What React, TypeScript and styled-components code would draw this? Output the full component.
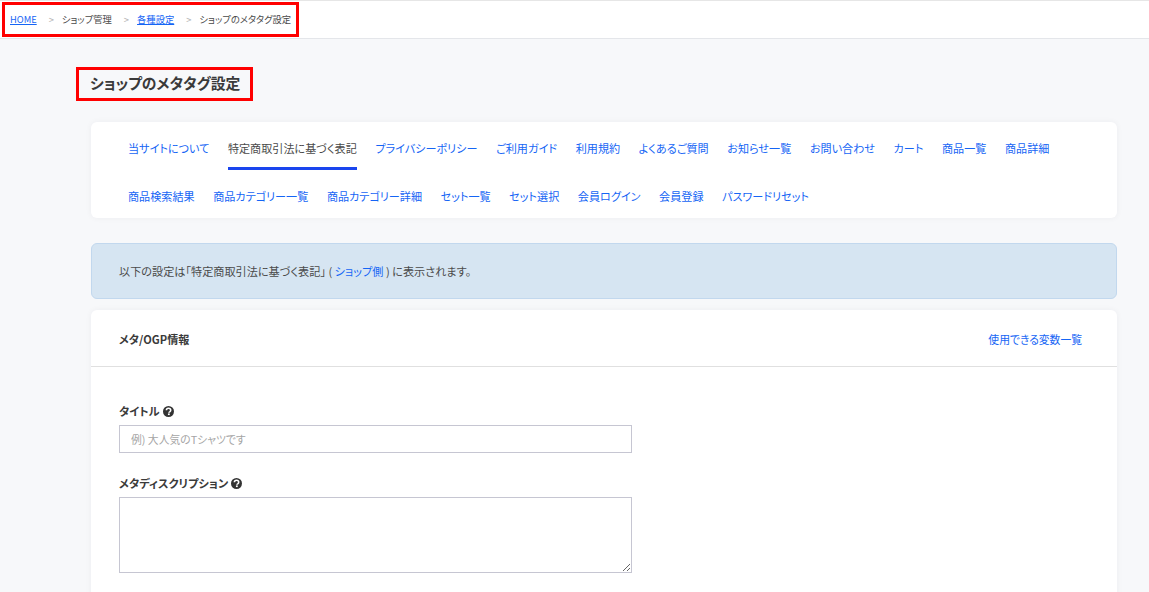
import React from "react";
import styled, { createGlobalStyle } from "styled-components";

const Global = createGlobalStyle`
  html, body { margin: 0; padding: 0; background: #f7f8fa; }
  body {
    font-family: "Noto Sans CJK JP", "Noto Sans", sans-serif;
    color: #333;
    height: 592px;
    overflow: hidden;
    font-feature-settings: "palt";
  }
  * { box-sizing: border-box; }
  a { text-decoration: none; }
`;

const TopBar = styled.header`
  height: 39px;
  background: #fff;
  border-top: 1px solid #e6e6e6;
  border-bottom: 1px solid #e4e6ea;
  display: flex;
  align-items: flex-start;
`;

const Crumbs = styled.nav`
  margin: 1px 0 0 2px;
  width: 297px;
  height: 35px;
  border: 3px solid #f00;
  display: flex;
  align-items: center;
  padding: 0 0 2px 5px;
  font-size: 9.3px;
  color: #4a4a4a;
  white-space: nowrap;
`;

const CrumbLink = styled.a`
  color: #1565f5;
  text-decoration: underline;
`;

const CrumbSep = styled.span`
  color: #b5b5b5;
  margin: 0 8px 0 12px;
`;

const Main = styled.main`
  padding: 28px 32px 0 91px;
`;

const TitleBox = styled.h1`
  margin: 0 0 21px -15px;
  width: 177px;
  height: 34px;
  border: 3px solid #f00;
  display: flex;
  align-items: center;
  padding: 0 0 3px 11px;
  font-size: 14.8px;
  font-weight: 700;
  color: #3a3a3a;
  white-space: nowrap;
`;

const TabCard = styled.div`
  background: #fff;
  border-radius: 6px;
  box-shadow: 0 0 6px rgba(30, 40, 60, 0.05);
  height: 96px;
  padding: 0 37px;
  margin-bottom: 25px;
  display: flex;
  flex-wrap: wrap;
  column-gap: 18.6px;
  align-content: flex-start;
`;

const Tab = styled.a<{ $active?: boolean }>`
  height: 48px;
  display: flex;
  align-items: center;
  font-size: 11.1px;
  white-space: nowrap;
  color: ${(p) => (p.$active ? "#4a4a4a" : "#1565f5")};
  border-bottom: 3px solid ${(p) => (p.$active ? "#1a45ee" : "transparent")};
  padding-top: 7px;
`;

const Notice = styled.div`
  height: 56px;
  background: #d6e5f2;
  border: 1px solid #c2d8ee;
  border-radius: 6px;
  display: flex;
  align-items: center;
  padding: 0 0 0 27px;
  font-size: 11.15px;
  color: #4a4a4a;
  margin-bottom: 11px;
  white-space: pre;
`;

const InlineLink = styled.a`
  color: #1565f5;
`;

const Panel = styled.section`
  background: #fff;
  border-radius: 6px 6px 0 0;
  box-shadow: 0 0 6px rgba(30, 40, 60, 0.05);
  height: 300px;
`;

const PanelHead = styled.div`
  height: 57px;
  border-bottom: 1px solid #e0e0e0;
  display: flex;
  align-items: center;
  justify-content: space-between;
  padding: 2px 35px 0 28px;
`;

const PanelTitle = styled.h2`
  margin: 0;
  font-size: 11.1px;
  font-weight: 700;
  color: #3a3a3a;
`;

const HeadLink = styled.a`
  font-size: 10.8px;
  color: #1565f5;
`;

const Form = styled.div`
  padding: 36px 0 0 28px;
`;

const Label = styled.label`
  display: flex;
  align-items: center;
  gap: 3px;
  height: 16px;
  margin-bottom: 6px;
  font-size: 11.2px;
  font-weight: 700;
  color: #3a3a3a;
`;

const Field = styled.input`
  display: block;
  width: 513px;
  height: 28px;
  border: 1px solid #c6c6d2;
  border-radius: 0;
  padding: 0 11px;
  margin-bottom: 22px;
  font: inherit;
  font-size: 10.8px;
  outline: none;
  &::placeholder { color: #a5a5a5; }
`;

const Area = styled.textarea`
  display: block;
  width: 513px;
  height: 76px;
  border: 1px solid #c6c6d2;
  border-radius: 0;
  padding: 6px 12px;
  font: inherit;
  outline: none;
`;

const HelpIcon = () => (
  <svg width="11" height="11" viewBox="0 0 16 16" aria-hidden="true">
    <circle cx="8" cy="8" r="8" fill="#333" />
    <path d="M4.9 6.2C5 4.4 6.4 3.3 8 3.3c1.8 0 3.2 1.1 3.2 2.8 0 1.2-.7 1.9-1.5 2.4-.7.4-1 .7-1 1.3" fill="none" stroke="#fff" strokeWidth="2.3" />
    <rect x="7.2" y="10.8" width="2.6" height="2.4" fill="#fff" />
  </svg>
);

const tabs = ["当サイトについて","特定商取引法に基づく表記","プライバシーポリシー","ご利用ガイド","利用規約","よくあるご質問","お知らせ一覧","お問い合わせ","カート","商品一覧","商品詳細","商品検索結果","商品カテゴリー一覧","商品カテゴリー詳細","セット一覧","セット選択","会員ログイン","会員登録","パスワードリセット"];

export default function App() {
  return (
    <>
      <Global />
      <TopBar>
        <Crumbs>
          <CrumbLink href="#">HOME</CrumbLink>
          <CrumbSep>&gt;</CrumbSep>
          <span>ショップ管理</span>
          <CrumbSep>&gt;</CrumbSep>
          <CrumbLink href="#">各種設定</CrumbLink>
          <CrumbSep>&gt;</CrumbSep>
          <span>ショップのメタタグ設定</span>
        </Crumbs>
      </TopBar>
      <Main>
        <TitleBox>ショップのメタタグ設定</TitleBox>
        <TabCard>
          {tabs.map((t, i) => (
            <Tab key={t} $active={i === 1} href="#">{t}</Tab>
          ))}
        </TabCard>
        <Notice>
          {"以下の設定は「特定商取引法に基づく表記」 ( "}
          <InlineLink href="#">ショップ側</InlineLink>
          {" ) に表示されます。"}
        </Notice>
        <Panel>
          <PanelHead>
            <PanelTitle>メタ/OGP情報</PanelTitle>
            <HeadLink href="#">使用できる変数一覧</HeadLink>
          </PanelHead>
          <Form>
            <Label>タイトル <HelpIcon /></Label>
            <Field placeholder="例) 大人気のTシャツです" />
            <Label>メタディスクリプション <HelpIcon /></Label>
            <Area />
          </Form>
        </Panel>
      </Main>
    </>
  );
}
